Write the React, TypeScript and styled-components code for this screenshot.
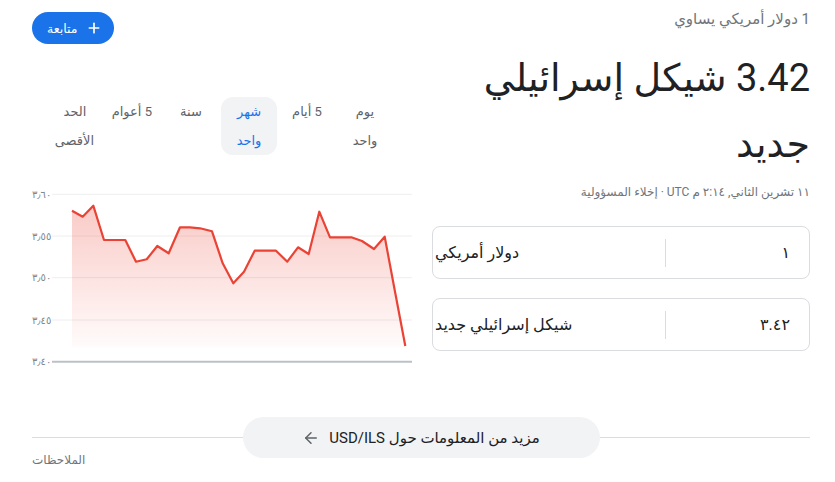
import React, { useState } from 'react';
import styled, { createGlobalStyle } from 'styled-components';
import { ArrowLeft, Plus } from 'lucide-react';

const ranges = [
  { id: '1D', label: 'يوم واحد' },
  { id: '5D', label: '5\u00a0أيام' },
  { id: '1M', label: 'شهر واحد' },
  { id: '1Y', label: 'سنة' },
  { id: '5Y', label: '5\u00a0أعوام' },
  { id: 'MAX', label: 'الحد الأقصى' },
];

const points: [number, number][] = [
  [40, 25.7], [50.7, 31.7], [61.3, 20.7], [72, 55], [93.3, 55], [104, 76.7],
  [114.7, 74.3], [125.3, 61], [136.7, 68.3], [148, 42.3], [158, 42.3], [168, 43.3],
  [180, 46.3], [190.7, 78.3], [201.3, 98.3], [212, 86.7], [222.7, 65.7], [244, 65.7],
  [255.3, 76.7], [266, 62.3], [276.7, 69], [287.3, 26.7], [298, 52.3], [319.3, 52.3],
  [330, 56], [342, 64], [352.7, 51.7], [363.3, 108.3], [373.3, 161],
];

const gridLines = [
  { y: 9.3, label: '٣٫٦٠' },
  { y: 51, label: '٣٫٥٥' },
  { y: 92.7, label: '٣٫٥٠' },
  { y: 135, label: '٣٫٤٥' },
];

//style
const GlobalStyle = createGlobalStyle`
  body {
    margin: 0;
    background: #ffffff;
    font-family: Roboto, "Noto Sans", "DejaVu Sans", sans-serif;
    color: #202124;
  }
`;

const Page = styled.div`
  direction: rtl;
  padding: 9px 25px 0 32px;
`;

const Main = styled.div`
  display: grid;
  grid-template-columns: 378px 380px;
  column-gap: 20px;
`;

const InfoColumn = styled.div`
  display: flex;
  flex-direction: column;
`;

const Subtitle = styled.div`
  font-size: 15px;
  line-height: 20px;
  color: #70757a;
`;

const Rate = styled.div`
  margin-top: 16px;
  font-size: 38px;
  line-height: 66px;
  color: #202124;
`;

const Stamp = styled.div`
  margin-top: 7px;
  font-size: 12px;
  line-height: 16px;
  color: #70757a;
`;

const Boxes = styled.div`
  display: flex;
  flex-direction: column;
  gap: 19px;
  margin-top: 26px;
`;

const ConvertBox = styled.div`
  display: flex;
  align-items: center;
  height: 53px;
  border: 1px solid #dadce0;
  border-radius: 8px;
  box-sizing: border-box;
`;

const Amount = styled.div`
  width: 143px;
  box-sizing: border-box;
  padding-right: 19px;
  font-size: 16px;
  color: #202124;
`;

const Divider = styled.div`
  width: 1px;
  height: 28px;
  background: #dadce0;
`;

const Currency = styled.div`
  flex: 1;
  text-align: left;
  padding-left: 2px;
  font-size: 16px;
  color: #202124;
`;

const ChartColumn = styled.div`
  display: flex;
  flex-direction: column;
`;

const FollowButton = styled.button`
  align-self: flex-end;
  display: flex;
  align-items: center;
  gap: 8px;
  margin-top: 3px;
  height: 32px;
  padding: 0 12px 0 15px;
  border: none;
  border-radius: 16px;
  background: #1a73e8;
  color: #ffffff;
  font-family: inherit;
  font-size: 12.5px;
  font-weight: 500;
`;

const Tabs = styled.div`
  display: flex;
  gap: 2px;
  margin-top: 53px;
  padding-right: 19px;
`;

const Tab = styled.div<{ $active: boolean }>`
  width: 56px;
  height: 58px;
  box-sizing: border-box;
  padding: 0 9px;
  border-radius: 12px;
  text-align: center;
  font-size: 13px;
  line-height: 29px;
  color: ${(p) => (p.$active ? '#1a73e8' : '#5f6368')};
  background: ${(p) => (p.$active ? '#f1f3f4' : 'transparent')};
  cursor: pointer;
`;

const ChartSvg = styled.svg`
  display: block;
  margin-top: 30px;
  direction: ltr;
`;

const Footer = styled.div`
  display: flex;
  align-items: center;
  margin-top: 47px;
`;

const Rule = styled.div`
  flex: 1;
  height: 1px;
  background: #dadce0;
`;

const MoreButton = styled.div`
  display: flex;
  align-items: center;
  justify-content: center;
  gap: 9px;
  width: 357px;
  height: 41px;
  border-radius: 21px;
  background: #f1f3f4;
  font-size: 15px;
  color: #202124;
`;

const Notes = styled.div`
  margin-top: -6px;
  text-align: left;
  font-size: 12px;
  line-height: 16px;
  color: #70757a;
`;

function PriceChart() {
  const line = points.map(([x, y], i) => `${i ? 'L' : 'M'}${x} ${y}`).join(' ');
  const area = `${line} L${points[points.length - 1][0]} 162 L${points[0][0]} 162 Z`;
  return (
    <ChartSvg width="380" height="185" viewBox="0 0 380 185">
      <defs>
        <linearGradient id="fill" x1="0" y1="0" x2="0" y2="1">
          <stop offset="0" stopColor="#ea4335" stopOpacity="0.28" />
          <stop offset="1" stopColor="#ea4335" stopOpacity="0.02" />
        </linearGradient>
      </defs>
      {gridLines.map((g) => (
        <g key={g.label}>
          <line x1="20" x2="380" y1={g.y} y2={g.y} stroke="#eeeeee" strokeWidth="1" />
          <text x="0" y={g.y + 3.5} fontSize="10" fill="#80868b">
            {g.label}
          </text>
        </g>
      ))}
      <path d={area} fill="url(#fill)" />
      <path d={line} fill="none" stroke="#ea4335" strokeWidth="2.2" strokeLinejoin="round" />
      <line x1="20" x2="380" y1="176.7" y2="176.7" stroke="#bdc1c6" strokeWidth="2" />
      <text x="0" y="180.2" fontSize="10" fill="#80868b">
        ٣٫٤٠
      </text>
    </ChartSvg>
  );
}

function App() {
  const [range, setRange] = useState('1M');

  return (
    <Page>
      <GlobalStyle />
      <Main>
        <InfoColumn>
          <Subtitle>1 دولار أمريكي يساوي</Subtitle>
          <Rate>3.42 شيكل إسرائيلي جديد</Rate>
          <Stamp>١١ تشرين الثاني, ٢:١٤ م UTC · إخلاء المسؤولية</Stamp>
          <Boxes>
            <ConvertBox>
              <Amount>١</Amount>
              <Divider />
              <Currency>دولار أمريكي</Currency>
            </ConvertBox>
            <ConvertBox>
              <Amount>٣.٤٢</Amount>
              <Divider />
              <Currency>شيكل إسرائيلي جديد</Currency>
            </ConvertBox>
          </Boxes>
        </InfoColumn>
        <ChartColumn>
          <FollowButton>
            <Plus size={16} strokeWidth={2.5} />
            متابعة
          </FollowButton>
          <Tabs>
            {ranges.map((r) => (
              <Tab key={r.id} $active={range === r.id} onClick={() => setRange(r.id)}>
                {r.label}
              </Tab>
            ))}
          </Tabs>
          <PriceChart />
        </ChartColumn>
      </Main>
      <Footer>
        <Rule />
        <MoreButton>
          مزيد من المعلومات حول USD/ILS
          <ArrowLeft size={18} color="#5f6368" />
        </MoreButton>
        <Rule />
      </Footer>
      <Notes>الملاحظات</Notes>
    </Page>
  );
}

export default App;
